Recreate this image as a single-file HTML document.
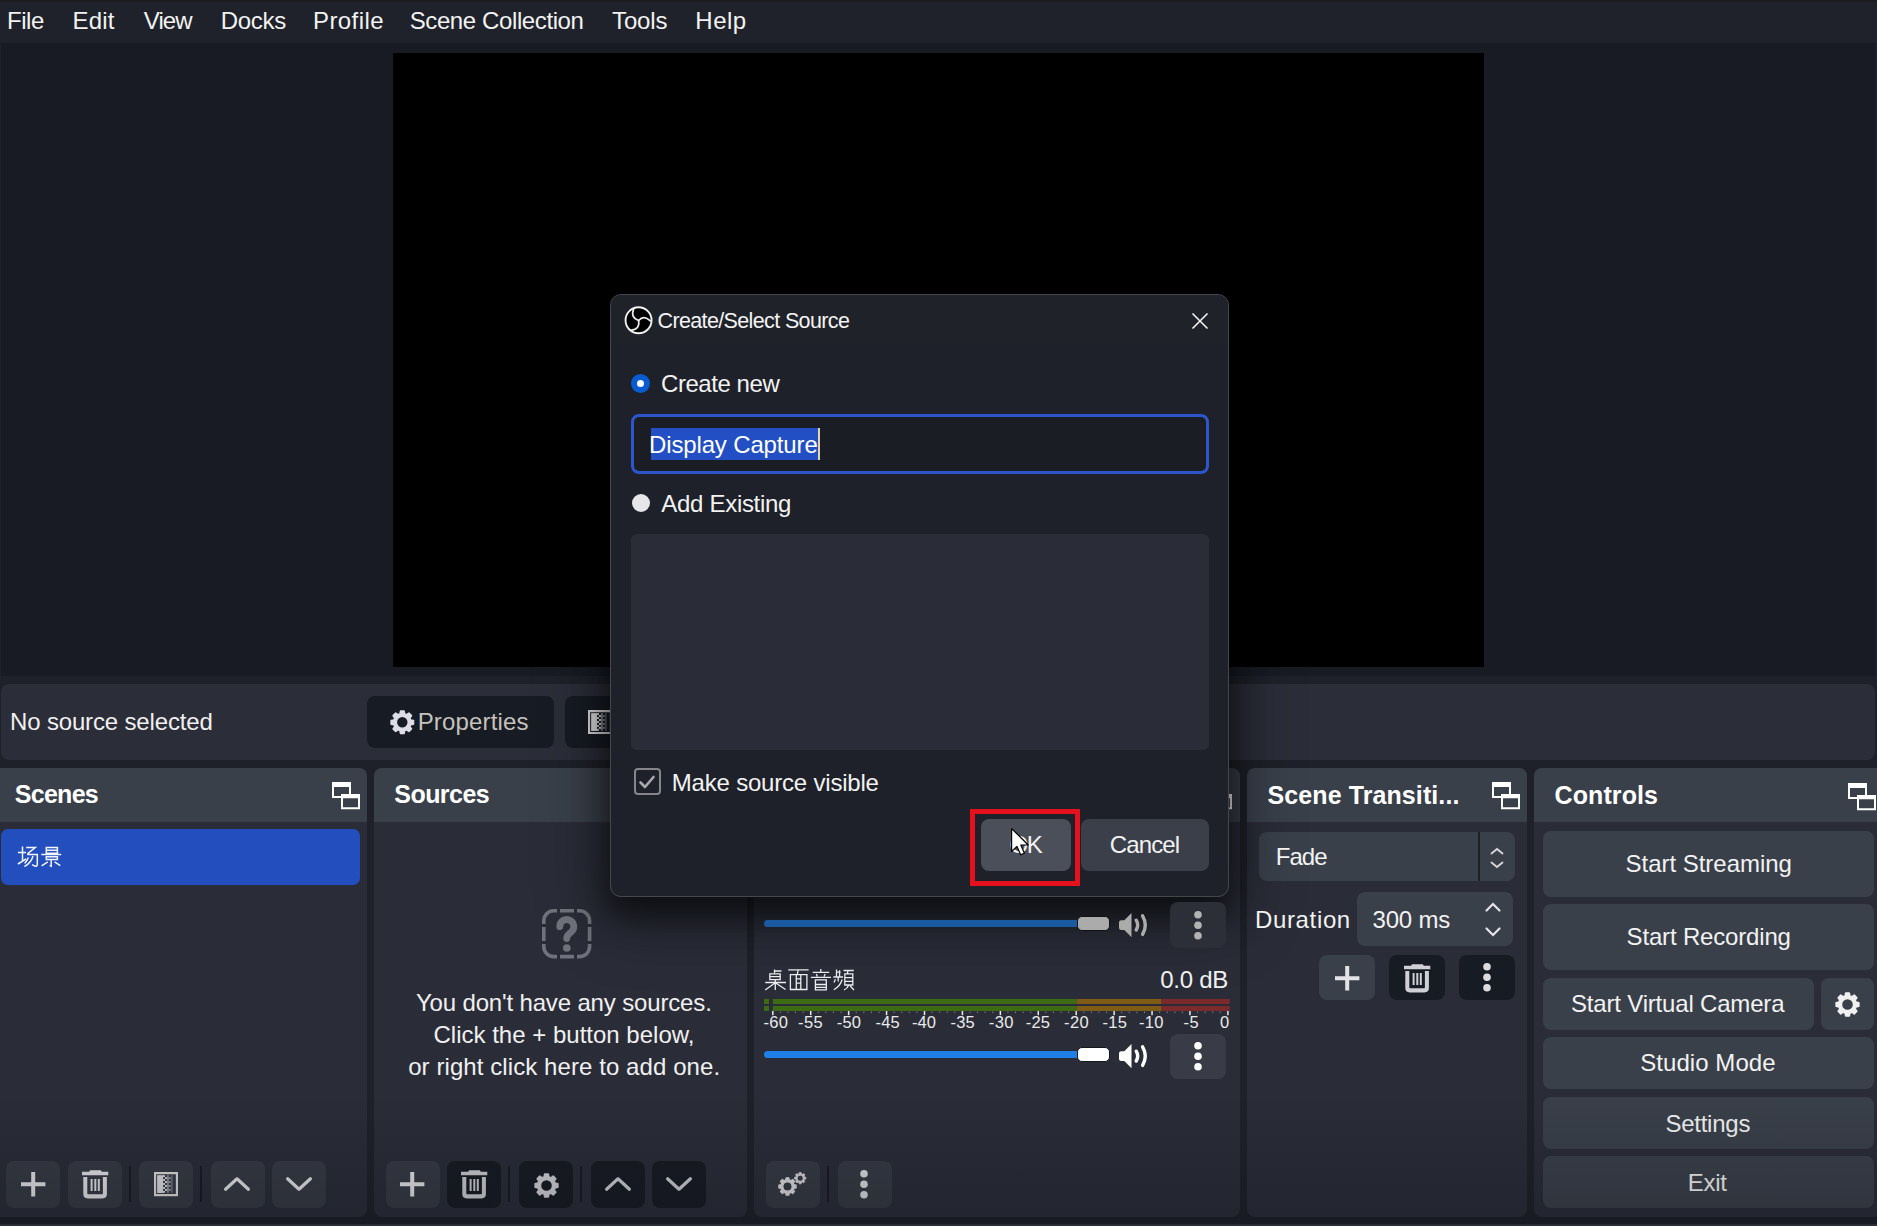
<!DOCTYPE html>
<html><head><meta charset="utf-8">
<style>
*{box-sizing:border-box;margin:0;padding:0}
html,body{width:1877px;height:1226px;overflow:hidden;background:#1e2129;font-family:"Liberation Sans",sans-serif;color:#f4f4f4}
.a{position:absolute}
.t{position:absolute;white-space:nowrap;line-height:1;font-family:"Liberation Sans",sans-serif}
.dock{position:absolute;top:768px;height:449px;background:#2a2d38;border-radius:8px;overflow:hidden}
.hd{position:absolute;left:0;top:0;right:0;height:54px;background:#3a404a}
.btn{position:absolute;background:#363a44;border-radius:8px}
.dk{background:#171b23}
.cb{position:absolute;background:#3a404a;border-radius:8px}
.sep{position:absolute;width:2px;background:#191b24}
svg{position:absolute;overflow:visible}
</style></head><body>
<svg width="0" height="0" style="position:absolute">
<defs>
<symbol id="gear" viewBox="-12.5 -12.5 25 25" overflow="visible"><path fill-rule="evenodd" stroke-width="1.6" stroke-linejoin="round" d="M-2.35,-8.48 L-1.83,-11.35 L1.83,-11.35 L2.35,-8.48 L4.34,-7.66 L6.73,-9.32 L9.32,-6.73 L7.66,-4.34 L8.48,-2.35 L11.35,-1.83 L11.35,1.83 L8.48,2.35 L7.66,4.34 L9.32,6.73 L6.73,9.32 L4.34,7.66 L2.35,8.48 L1.83,11.35 L-1.83,11.35 L-2.35,8.48 L-4.34,7.66 L-6.73,9.32 L-9.32,6.73 L-7.66,4.34 L-8.48,2.35 L-11.35,1.83 L-11.35,-1.83 L-8.48,-2.35 L-7.66,-4.34 L-9.32,-6.73 L-6.73,-9.32 L-4.34,-7.66Z M6.10,0 A6.1,6.1 0 1 0 -6.10,0 A6.1,6.1 0 1 0 6.10,0Z"/></symbol>
<symbol id="float" viewBox="0 0 28 28" overflow="visible">
<path fill="currentColor" fill-rule="evenodd" d="M0,0H19V16H0Z M2,5V14H17V5Z"/>
<path fill="var(--bg)" d="M9,12H28V27H9Z"/>
<path fill="currentColor" fill-rule="evenodd" d="M9,12H28V27.3H9Z M11,16.3V25.3H26V16.3Z"/>
</symbol>
<symbol id="trash" viewBox="0 0 27 29" overflow="visible">
<path fill="currentColor" d="M8.1,0.2H18.8L19.8,1.8H26.3V5.3H0V1.8H7.1Z"/>
<path fill="currentColor" d="M1.3,7H5.3V23.5Q5.3,24.3 6.1,24.3H20.1Q20.9,24.3 20.9,23.5V7H24.9V24Q24.9,28.4 20.5,28.4H5.7Q1.3,28.4 1.3,24Z"/>
<rect fill="currentColor" x="8.6" y="9" width="2" height="12"/>
<rect fill="currentColor" x="12.3" y="9" width="2" height="12"/>
<rect fill="currentColor" x="15.8" y="9" width="2" height="12"/>
</symbol>
<symbol id="plus" viewBox="0 0 24.4 24.4" overflow="visible"><path fill="currentColor" d="M10.2,0H14.2V10.2H24.4V14.2H14.2V24.4H10.2V14.2H0V10.2H10.2Z"/></symbol>
<symbol id="up" viewBox="0 0 26 14" overflow="visible"><path fill="none" stroke="currentColor" stroke-width="3.2" stroke-linecap="round" stroke-linejoin="round" d="M1.6,12.2L13,1.8L24.4,12.2"/></symbol>
<symbol id="down" viewBox="0 0 26 14" overflow="visible"><path fill="none" stroke="currentColor" stroke-width="3.2" stroke-linecap="round" stroke-linejoin="round" d="M1.6,1.8L13,12.2L24.4,1.8"/></symbol>
<symbol id="dots" viewBox="0 0 8 29" overflow="visible"><circle fill="currentColor" cx="4" cy="3.8" r="3.8"/><circle fill="currentColor" cx="4" cy="14.3" r="3.8"/><circle fill="currentColor" cx="4" cy="24.8" r="3.8"/></symbol>
<symbol id="spk" viewBox="0 0 29 25" overflow="visible">
<path fill="currentColor" d="M12.5,0V24.2L5.3,17H2.2Q0,17 0,14.8V9.4Q0,7.2 2.2,7.2H5.3Z"/>
<path fill="none" stroke="currentColor" stroke-width="3.4" stroke-linecap="round" d="M17.2,7.2Q20.2,12.1 17.2,17"/>
<path fill="none" stroke="currentColor" stroke-width="3.4" stroke-linecap="round" d="M23.6,2.8Q29,12.1 23.6,21.4"/>
</symbol>
<symbol id="filt" viewBox="0 0 25 25" overflow="visible">
<path fill="currentColor" fill-rule="evenodd" d="M0,0H24.5V24.6H0Z M2.2,2.2V22.4H22.3V2.2Z"/>
<rect fill="currentColor" x="3.2" y="3.2" width="6" height="18.2"/>
<g fill="currentColor"><rect x="9.2" y="3.2" width="2" height="2"/><rect x="11.2" y="5.2" width="2" height="2"/><rect x="9.2" y="7.2" width="2" height="2"/><rect x="11.2" y="9.2" width="2" height="2"/><rect x="9.2" y="11.2" width="2" height="2"/><rect x="11.2" y="13.2" width="2" height="2"/><rect x="9.2" y="15.2" width="2" height="2"/><rect x="11.2" y="17.2" width="2" height="2"/><rect x="9.2" y="19.2" width="2" height="2"/></g>
<g fill="currentColor" opacity=".55"><rect x="13.2" y="3.2" width="2" height="18"/><rect x="15.2" y="5.2" width="2" height="2"/><rect x="15.2" y="9.2" width="2" height="2"/><rect x="15.2" y="13.2" width="2" height="2"/><rect x="15.2" y="17.2" width="2" height="2"/></g>
<g fill="currentColor" opacity=".3"><rect x="17.2" y="3.2" width="2" height="18"/></g>
</symbol>
</defs></svg>

<!-- menubar -->
<div class="a" style="left:0;top:0;width:1877px;height:43px;background:#1f222a;border-top:2px solid #1c1c1e"></div>
<!-- preview -->
<div class="a" style="left:1px;top:43px;width:1874px;height:633px;background:#181b24"></div>
<div class="a" style="left:393px;top:53px;width:1091px;height:614px;background:#000"></div>
<!-- properties bar -->
<div class="a" style="left:1px;top:684px;width:1874px;height:76px;background:#2b2d38;border-radius:8px"></div>
<div class="btn dk" style="left:367px;top:696px;width:187px;height:52px"></div>
<svg style="left:389.7px;top:709.7px;color:#dcdde6" width="24.6" height="24.6"><use href="#gear" width="24.6" height="24.6" fill="#dcdde6" stroke="#dcdde6"/></svg>
<div class="btn dk" style="left:565px;top:696px;width:200px;height:52px"></div>
<svg style="left:587.7px;top:710px;color:#e0e0e4" width="24.5" height="24.5"><use href="#filt" width="24.5" height="24.5"/></svg>

<!-- docks -->
<div class="dock" style="left:0;width:367px;border-radius:0 8px 8px 0"><div class="hd"></div></div>
<div class="dock" style="left:374px;width:373px"><div class="hd"></div></div>
<div class="dock" style="left:754px;width:486px"><div class="hd"></div></div>
<div class="dock" style="left:1247px;width:280px"><div class="hd"></div></div>
<div class="dock" style="left:1534px;width:350px"><div class="hd"></div></div>
<!-- float icons -->
<svg style="left:332.3px;top:782.3px;color:#fff;--bg:#3a404a" width="28" height="28"><use href="#float" width="28" height="28"/></svg>
<svg style="left:712px;top:782.3px;color:#fff;--bg:#3a404a" width="28" height="28"><use href="#float" width="28" height="28"/></svg>
<svg style="left:1204.4px;top:782.3px;color:#fff;--bg:#3a404a" width="28" height="28"><use href="#float" width="28" height="28"/></svg>
<svg style="left:1492.3px;top:782.3px;color:#fff;--bg:#3a404a" width="28" height="28"><use href="#float" width="28" height="28"/></svg>
<svg style="left:1847.7px;top:782.5px;color:#fff;--bg:#3a404a" width="28" height="28"><use href="#float" width="28" height="28"/></svg>

<!-- scenes -->
<div class="a" style="left:1px;top:829px;width:359px;height:56px;background:#224ebe;border-radius:7px"></div>
<svg style="left:0;top:0" width="1" height="1"><g fill="none" stroke="#f4f6ff" stroke-width="1.5" stroke-linecap="butt">
<path d="M22.5,846.5V860.5M17.9,852.5H26M17.9,864L26.2,858.8"/>
<path d="M26.2,847.6H35.2L27.4,853.8M27.2,854.6H37.3V864.6Q37.3,866.3 35.3,866.2L32,864.6"/>
<path d="M28.3,857.6Q27,861.5 24.6,863.3M33,856Q31.5,862.5 24.5,866.5"/>
<path d="M46.3,847.5H57.4V853.3H46.3ZM46.3,850.3H57.4M41.3,854.6H61.2M46.3,856.7H57.4V859.5H46.3ZM51.2,859.5V866.2L49.6,865.4M47.8,861.8L41.6,865.8M54.6,861.8L60.3,865.6"/>
</g></svg>
<div class="btn" style="left:6px;top:1161px;width:54px;height:47px"></div>
<svg style="left:20.8px;top:1171.7px;color:#e2e3e6" width="24.4" height="24.4"><use href="#plus" width="24.4" height="24.4"/></svg>
<div class="btn" style="left:68px;top:1161px;width:54px;height:47px"></div>
<svg style="left:81.7px;top:1169.8px;color:#e2e3e6" width="27" height="29"><use href="#trash" width="27" height="29"/></svg>
<div class="sep" style="left:128.5px;top:1166px;height:36px"></div>
<div class="btn" style="left:139px;top:1161px;width:54px;height:47px"></div>
<svg style="left:153.7px;top:1171.6px;color:#dcdce0" width="24.5" height="24.6"><use href="#filt" width="24.5" height="24.6"/></svg>
<div class="sep" style="left:199.5px;top:1166px;height:36px"></div>
<div class="btn" style="left:211px;top:1161px;width:54px;height:47px"></div>
<svg style="left:224px;top:1176.5px;color:#e2e3e6" width="26" height="14"><use href="#up" width="26" height="14"/></svg>
<div class="btn" style="left:272px;top:1161px;width:54px;height:47px"></div>
<svg style="left:286px;top:1177px;color:#e2e3e6" width="26" height="14"><use href="#down" width="26" height="14"/></svg>

<!-- sources -->
<svg style="left:541.5px;top:908.5px" width="50" height="50" viewBox="0 0 50 50">
<defs><mask id="qm"><rect x="-2" y="-2" width="54" height="54" fill="#fff"/><g fill="#000"><rect x="15" y="-2" width="3" height="8"/><rect x="32" y="-2" width="3" height="8"/><rect x="15" y="44" width="3" height="8"/><rect x="32" y="44" width="3" height="8"/><rect x="-2" y="15" width="8" height="3"/><rect x="-2" y="32" width="8" height="3"/><rect x="44" y="15" width="8" height="3"/><rect x="44" y="32" width="8" height="3"/></g></mask></defs>
<rect x="1.8" y="1.8" width="45.8" height="45.8" rx="10" fill="none" stroke="#70737b" stroke-width="3.6" mask="url(#qm)"/>
<path fill="none" stroke="#70737b" stroke-width="6.8" stroke-linecap="round" d="M17.8,17.6A7,7 0 1 1 29.6,22.6L27,25Q24.7,27 24.7,29.5"/>
<rect x="14.4" y="14.6" width="0" height="0"/>
<circle cx="24.8" cy="39" r="3.8" fill="#70737b"/>
</svg>
<div class="btn" style="left:386px;top:1161px;width:54px;height:47px"></div>
<svg style="left:400px;top:1171.7px;color:#e2e3e6" width="24.4" height="24.4"><use href="#plus" width="24.4" height="24.4"/></svg>
<div class="btn dk" style="left:447px;top:1161px;width:54px;height:47px"></div>
<svg style="left:461px;top:1169.8px;color:#cbccd2" width="27" height="29"><use href="#trash" width="27" height="29"/></svg>
<div class="sep" style="left:508px;top:1166px;height:36px"></div>
<div class="btn dk" style="left:519px;top:1161px;width:54px;height:47px"></div>
<svg style="left:533.5px;top:1173px;" width="25" height="25"><use href="#gear" width="25" height="25" fill="#cfd0d6" stroke="#cfd0d6"/></svg>
<div class="sep" style="left:579.5px;top:1166px;height:36px"></div>
<div class="btn dk" style="left:590.5px;top:1161px;width:54px;height:47px"></div>
<svg style="left:604.5px;top:1176.5px;color:#cbccd2" width="26" height="14"><use href="#up" width="26" height="14"/></svg>
<div class="btn dk" style="left:652px;top:1161px;width:54px;height:47px"></div>
<svg style="left:666px;top:1177px;color:#cbccd2" width="26" height="14"><use href="#down" width="26" height="14"/></svg>

<!-- mixer -->
<!-- row2 -->
<svg style="left:0;top:0" width="1" height="1">
<rect x="764" y="999" width="5" height="5" fill="#3d6b14"/><rect x="764" y="1006" width="5" height="5" fill="#3d6b14"/>
<rect x="772.8" y="999" width="303.7" height="5" fill="#3d6b14"/><rect x="772.8" y="1006" width="303.7" height="5" fill="#3d6b14"/>
<rect x="1076.5" y="999" width="84.5" height="5" fill="#7e5c16"/><rect x="1076.5" y="1006" width="84.5" height="5" fill="#7e5c16"/>
<rect x="1161" y="999" width="68.8" height="5" fill="#7b2a2c"/><rect x="1161" y="1006" width="68.8" height="5" fill="#7b2a2c"/>
<rect x="772.05" y="1011" width="1.5" height="4.2" fill="#e8e8e8"/><rect x="779.88" y="1011.5" width="1" height="1.6" fill="#7a7c82"/><rect x="787.47" y="1011.5" width="1" height="1.6" fill="#7a7c82"/><rect x="795.05" y="1011.5" width="1" height="1.6" fill="#7a7c82"/><rect x="802.64" y="1011.5" width="1" height="1.6" fill="#7a7c82"/><rect x="809.97" y="1011" width="1.5" height="4.2" fill="#e8e8e8"/><rect x="817.81" y="1011.5" width="1" height="1.6" fill="#7a7c82"/><rect x="825.39" y="1011.5" width="1" height="1.6" fill="#7a7c82"/><rect x="832.98" y="1011.5" width="1" height="1.6" fill="#7a7c82"/><rect x="840.56" y="1011.5" width="1" height="1.6" fill="#7a7c82"/><rect x="847.90" y="1011" width="1.5" height="4.2" fill="#e8e8e8"/><rect x="855.73" y="1011.5" width="1" height="1.6" fill="#7a7c82"/><rect x="863.32" y="1011.5" width="1" height="1.6" fill="#7a7c82"/><rect x="870.90" y="1011.5" width="1" height="1.6" fill="#7a7c82"/><rect x="878.49" y="1011.5" width="1" height="1.6" fill="#7a7c82"/><rect x="885.82" y="1011" width="1.5" height="4.2" fill="#e8e8e8"/><rect x="893.66" y="1011.5" width="1" height="1.6" fill="#7a7c82"/><rect x="901.24" y="1011.5" width="1" height="1.6" fill="#7a7c82"/><rect x="908.83" y="1011.5" width="1" height="1.6" fill="#7a7c82"/><rect x="916.41" y="1011.5" width="1" height="1.6" fill="#7a7c82"/><rect x="923.75" y="1011" width="1.5" height="4.2" fill="#e8e8e8"/><rect x="931.58" y="1011.5" width="1" height="1.6" fill="#7a7c82"/><rect x="939.17" y="1011.5" width="1" height="1.6" fill="#7a7c82"/><rect x="946.75" y="1011.5" width="1" height="1.6" fill="#7a7c82"/><rect x="954.34" y="1011.5" width="1" height="1.6" fill="#7a7c82"/><rect x="961.67" y="1011" width="1.5" height="4.2" fill="#e8e8e8"/><rect x="969.51" y="1011.5" width="1" height="1.6" fill="#7a7c82"/><rect x="977.09" y="1011.5" width="1" height="1.6" fill="#7a7c82"/><rect x="984.68" y="1011.5" width="1" height="1.6" fill="#7a7c82"/><rect x="992.26" y="1011.5" width="1" height="1.6" fill="#7a7c82"/><rect x="999.60" y="1011" width="1.5" height="4.2" fill="#e8e8e8"/><rect x="1007.43" y="1011.5" width="1" height="1.6" fill="#7a7c82"/><rect x="1015.02" y="1011.5" width="1" height="1.6" fill="#7a7c82"/><rect x="1022.60" y="1011.5" width="1" height="1.6" fill="#7a7c82"/><rect x="1030.19" y="1011.5" width="1" height="1.6" fill="#7a7c82"/><rect x="1037.52" y="1011" width="1.5" height="4.2" fill="#e8e8e8"/><rect x="1045.36" y="1011.5" width="1" height="1.6" fill="#7a7c82"/><rect x="1052.94" y="1011.5" width="1" height="1.6" fill="#7a7c82"/><rect x="1060.53" y="1011.5" width="1" height="1.6" fill="#7a7c82"/><rect x="1068.11" y="1011.5" width="1" height="1.6" fill="#7a7c82"/><rect x="1075.45" y="1011" width="1.5" height="4.2" fill="#e8e8e8"/><rect x="1083.28" y="1011.5" width="1" height="1.6" fill="#7a7c82"/><rect x="1090.87" y="1011.5" width="1" height="1.6" fill="#7a7c82"/><rect x="1098.45" y="1011.5" width="1" height="1.6" fill="#7a7c82"/><rect x="1106.04" y="1011.5" width="1" height="1.6" fill="#7a7c82"/><rect x="1113.38" y="1011" width="1.5" height="4.2" fill="#e8e8e8"/><rect x="1121.21" y="1011.5" width="1" height="1.6" fill="#7a7c82"/><rect x="1128.79" y="1011.5" width="1" height="1.6" fill="#7a7c82"/><rect x="1136.38" y="1011.5" width="1" height="1.6" fill="#7a7c82"/><rect x="1143.96" y="1011.5" width="1" height="1.6" fill="#7a7c82"/><rect x="1151.30" y="1011" width="1.5" height="4.2" fill="#e8e8e8"/><rect x="1159.13" y="1011.5" width="1" height="1.6" fill="#7a7c82"/><rect x="1166.72" y="1011.5" width="1" height="1.6" fill="#7a7c82"/><rect x="1174.30" y="1011.5" width="1" height="1.6" fill="#7a7c82"/><rect x="1181.89" y="1011.5" width="1" height="1.6" fill="#7a7c82"/><rect x="1189.22" y="1011" width="1.5" height="4.2" fill="#e8e8e8"/><rect x="1197.06" y="1011.5" width="1" height="1.6" fill="#7a7c82"/><rect x="1204.64" y="1011.5" width="1" height="1.6" fill="#7a7c82"/><rect x="1212.23" y="1011.5" width="1" height="1.6" fill="#7a7c82"/><rect x="1219.81" y="1011.5" width="1" height="1.6" fill="#7a7c82"/><rect x="1227.15" y="1011" width="1.5" height="4.2" fill="#e8e8e8"/>
<g fill="none" stroke="#eceef2" stroke-width="1.3" stroke-linecap="butt">
<path d="M774.5,969.6V973M774.5,971H781.5M769.8,973.8H780.2V979.7H769.8ZM769.8,976.7H780.2M765.3,982.5H786M775.3,979.7V990M775.3,982.7L765.2,990M775.3,982.7L785.6,989.5"/>
<path d="M788.2,969.9H808.6M798.3,969.9L797.2,974.4M790.4,974.6H806.9V989.5H790.4ZM796.3,974.6V989.5M800.8,974.6V989.5M796.3,978.8H800.8M796.3,983.2H800.8"/>
<path d="M820.8,969V972M812.7,972.3H829.2M816.3,974L817.4,976.6M825.2,974L824,976.6M810.9,977.3H831M815.4,979.8H826.3V989.8H815.4ZM815.4,984.5H826.3M815.4,987.3H826.3"/>
<path d="M836.5,969.5V976.8M836.5,972.2H840.6M839.6,970.2V976.8M833.3,977H843M838.2,977V981.5M835.4,979.2L834,982.5M842.2,979.5Q840,986.5 833.8,989.8M843.5,970.5H853.8M848.2,970.5L847.2,973.5M844.8,973.8H852.8V985H844.8ZM844.8,977.6H852.8M844.8,981.3H852.8M848.8,985Q847.5,988.5 844,990M850.2,986L854,990"/>
</g>
</svg>
<div class="a" style="left:764px;top:1051px;width:316px;height:7px;background:#1e80e6;border-radius:3.5px 0 0 3.5px"></div>
<div class="a" style="left:1076.5px;top:1046.6px;width:33px;height:15.5px;background:#fff;border:1px solid #15171c;border-radius:5px"></div>
<svg style="left:1118.9px;top:1043.9px;color:#fff" width="29" height="25"><use href="#spk" width="29" height="25"/></svg>
<div class="btn" style="left:1170px;top:1033.6px;width:56px;height:45.5px;background:#393c47"></div>
<svg style="left:1194px;top:1041.8px;color:#fff" width="8" height="29"><use href="#dots" width="8" height="29"/></svg>

<div class="btn" style="left:766px;top:1161px;width:54px;height:47px"></div>
<svg style="left:777.9px;top:1177.2px" width="19" height="19"><use href="#gear" width="19" height="19" fill="#dcdce0" stroke="#dcdce0"/></svg>
<svg style="left:793.7px;top:1171.7px" width="12.4" height="12.4"><use href="#gear" width="12.4" height="12.4" fill="#dcdce0" stroke="#dcdce0"/></svg>
<div class="sep" style="left:826.5px;top:1166px;height:36px"></div>
<div class="btn" style="left:838px;top:1161px;width:54px;height:47px"></div>
<svg style="left:860px;top:1169.7px;color:#dcdce0" width="8" height="29"><use href="#dots" width="8" height="29"/></svg>

<!-- transitions -->
<div class="cb" style="left:1259px;top:832px;width:256px;height:49px"></div>
<div class="a" style="left:1478px;top:832px;width:1.5px;height:49px;background:#1f2129"></div>
<svg style="left:1490px;top:847.5px" width="14" height="20" viewBox="0 0 14 20"><path fill="none" stroke="#d8d8dc" stroke-width="1.8" stroke-linecap="round" d="M1.5,5.5L7,1L12.5,5.5M1.5,14.5L7,19L12.5,14.5"/></svg>
<div class="cb" style="left:1357px;top:892px;width:156px;height:54px"></div>
<svg style="left:1485px;top:901.5px" width="16" height="35" viewBox="0 0 16 35"><path fill="none" stroke="#e4e4e8" stroke-width="2.2" stroke-linecap="round" d="M1.5,8.5L8,2L14.5,8.5M1.5,26.5L8,33L14.5,26.5"/></svg>
<div class="cb" style="left:1319px;top:955px;width:56px;height:45px"></div>
<svg style="left:1335px;top:966px;color:#e4e4e8" width="24.4" height="24.4"><use href="#plus" width="24.4" height="24.4"/></svg>
<div class="btn dk" style="left:1389px;top:955px;width:56px;height:45px"></div>
<svg style="left:1403.5px;top:964px;color:#cfd0d6" width="27" height="29"><use href="#trash" width="27" height="29"/></svg>
<div class="btn dk" style="left:1459px;top:955px;width:56px;height:45px"></div>
<svg style="left:1483px;top:963px;color:#dcdce0" width="8" height="29"><use href="#dots" width="8" height="29"/></svg>

<!-- controls -->
<div class="cb" style="left:1543px;top:830.5px;width:331px;height:66px"></div>
<div class="cb" style="left:1543px;top:904px;width:331px;height:66px"></div>
<div class="cb" style="left:1543px;top:978px;width:271px;height:52px"></div>
<div class="cb" style="left:1821px;top:978px;width:53px;height:52px"></div>
<svg style="left:1835px;top:991.5px" width="25" height="25"><use href="#gear" width="25" height="25" fill="#f0f0f0" stroke="#f0f0f0"/></svg>
<div class="cb" style="left:1543px;top:1037px;width:331px;height:52px"></div>
<div class="cb" style="left:1543px;top:1097px;width:331px;height:52px"></div>
<div class="cb" style="left:1543px;top:1156px;width:331px;height:52px"></div>

<!-- dialog -->
<div class="a" style="left:610px;top:294px;width:619px;height:603px;border-radius:11px;box-shadow:0 16px 30px 2px rgba(0,0,0,.5),0 14px 60px 14px rgba(0,0,0,.35)"></div>
<!-- row1 (shadowed) -->
<div class="a" style="left:764px;top:920px;width:316px;height:7px;background:#1a5aa0;border-radius:3.5px 0 0 3.5px"></div>
<div class="a" style="left:1076.5px;top:915.6px;width:33px;height:15.5px;background:#ababab;border:1px solid #101115;border-radius:5px"></div>
<svg style="left:1118.9px;top:912.8px;color:#ababab" width="29" height="25"><use href="#spk" width="29" height="25"/></svg>
<div class="btn" style="left:1170px;top:902px;width:56px;height:46px;background:#2c2f38"></div>
<svg style="left:1194px;top:911px;color:#b3b3b3" width="8" height="29"><use href="#dots" width="8" height="29"/></svg>
<div class="a" style="left:610px;top:294px;width:619px;height:603px;background:#1e2129;border:1px solid #45474f;border-radius:11px;overflow:hidden">
<div class="a" style="left:0;top:0;width:619px;height:48px;background:#20222a"></div>
</div>
<svg style="left:623.5px;top:305.5px" width="29" height="29" viewBox="0 0 29 29">
<circle cx="14.56" cy="14.3" r="13" fill="#000" stroke="#f2f2f2" stroke-width="1.9"/>
<g fill="none" stroke="#eaeaea" stroke-width="1.7" stroke-linecap="round">
<path d="M9.6,3.3Q6.2,11.5 14.6,14.5"/><path d="M14.6,14.5Q19.8,8.6 26.3,14.8"/><path d="M14.6,14.5Q16.2,23 7.2,24.2"/>
</g>
</svg>
<svg style="left:1192px;top:313px" width="16" height="16" viewBox="0 0 16 16"><path stroke="#f2f2f2" stroke-width="1.6" d="M0.5,0.5L15.5,15.5M15.5,0.5L0.5,15.5"/></svg>
<div class="a" style="left:630.6px;top:373.8px;width:19.4px;height:19.4px;border-radius:50%;background:#0a5bd0"></div>
<div class="a" style="left:636.8px;top:380px;width:7px;height:7px;border-radius:50%;background:#fff"></div>
<div class="a" style="left:631px;top:414px;width:578px;height:60px;border:3.5px solid #2d56cc;border-radius:8px;background:#1b1d24"></div>
<div class="a" style="left:651px;top:428px;width:167px;height:32px;background:#234fc4"></div>
<div class="a" style="left:818px;top:428px;width:2px;height:32px;background:#e0d6b0"></div>
<div class="a" style="left:631.5px;top:493.6px;width:18px;height:18px;border-radius:50%;background:#e6e6ea"></div>
<div class="a" style="left:631px;top:533.5px;width:578px;height:216.5px;background:#2a2c37;border-radius:6px"></div>
<div class="a" style="left:633.5px;top:768.4px;width:27px;height:27px;border:2.2px solid #85868c;border-radius:4px"></div>
<svg style="left:637px;top:772px" width="20" height="20" viewBox="0 0 20 20"><path fill="none" stroke="#a9aab0" stroke-width="2.6" stroke-linecap="round" stroke-linejoin="round" d="M3.5,10.5L8,15L16.5,5"/></svg>
<div class="a" style="left:981px;top:818.6px;width:89.5px;height:52.4px;background:#4b4f59;border-radius:8px"></div>
<div class="a" style="left:1081px;top:818.6px;width:128px;height:52.4px;background:#3a3f49;border-radius:8px"></div>

<div class="t" style="left:6.9px;top:9.1px;font-weight:400;font-size:24px;letter-spacing:-0.417px;color:#f2f2f2;">File</div>
<div class="t" style="left:72.6px;top:9.1px;font-weight:400;font-size:24px;letter-spacing:0.133px;color:#f2f2f2;">Edit</div>
<div class="t" style="left:143.8px;top:9.1px;font-weight:400;font-size:24px;letter-spacing:-0.967px;color:#f2f2f2;">View</div>
<div class="t" style="left:220.7px;top:9.1px;font-weight:400;font-size:24px;letter-spacing:-0.275px;color:#f2f2f2;">Docks</div>
<div class="t" style="left:313.0px;top:9.1px;font-weight:400;font-size:24px;letter-spacing:0.417px;color:#f2f2f2;">Profile</div>
<div class="t" style="left:409.7px;top:9.1px;font-weight:400;font-size:24px;letter-spacing:-0.393px;color:#f2f2f2;">Scene Collection</div>
<div class="t" style="left:612.1px;top:9.1px;font-weight:400;font-size:24px;letter-spacing:-0.175px;color:#f2f2f2;">Tools</div>
<div class="t" style="left:695.3px;top:9.1px;font-weight:400;font-size:24px;letter-spacing:0.5px;color:#f2f2f2;">Help</div>
<div class="t" style="left:10.0px;top:710.4px;font-weight:400;font-size:24px;letter-spacing:-0.153px;color:#f0f0f0;">No source selected</div>
<div class="t" style="left:417.7px;top:710.1px;font-weight:400;font-size:24px;letter-spacing:0.167px;color:#c6c2bd;">Properties</div>
<div class="t" style="left:14.8px;top:782.2px;font-weight:700;font-size:25px;letter-spacing:-0.72px;color:#ffffff;">Scenes</div>
<div class="t" style="left:394.3px;top:782.4px;font-weight:700;font-size:25px;letter-spacing:-0.55px;color:#ffffff;">Sources</div>
<div class="t" style="left:1267.6px;top:782.9px;font-weight:700;font-size:25px;letter-spacing:0.088px;color:#ffffff;">Scene Transiti...</div>
<div class="t" style="left:1554.5px;top:782.5px;font-weight:700;font-size:25px;letter-spacing:0.1px;color:#ffffff;">Controls</div>
<div class="t" style="left:657.5px;top:310.7px;font-weight:400;font-size:21.5px;letter-spacing:-0.632px;color:#f4f4f4;">Create/Select Source</div>
<div class="t" style="left:661.0px;top:372.4px;font-weight:400;font-size:24px;letter-spacing:-0.444px;color:#f2f2f2;">Create new</div>
<div class="t" style="left:649.0px;top:432.9px;font-weight:400;font-size:24px;letter-spacing:-0.143px;color:#ffffff;">Display Capture</div>
<div class="t" style="left:661.3px;top:491.6px;font-weight:400;font-size:24px;letter-spacing:-0.3px;color:#f2f2f2;">Add Existing</div>
<div class="t" style="left:671.8px;top:770.8px;font-weight:400;font-size:24px;letter-spacing:-0.2px;color:#f2f2f2;">Make source visible</div>
<div class="t" style="left:1109.7px;top:833.3px;font-weight:400;font-size:24px;letter-spacing:-0.84px;color:#f2f2f2;">Cancel</div>
<div class="t" style="left:1009.5px;top:833.3px;font-weight:400;font-size:24px;letter-spacing:-1.5px;color:#f2f2f2;">OK</div>
<div class="t" style="left:415.9px;top:991.4px;font-weight:400;font-size:24px;letter-spacing:-0.154px;color:#f0f0f0;">You don&#x27;t have any sources.</div>
<div class="t" style="left:433.5px;top:1023.0px;font-weight:400;font-size:24px;letter-spacing:0.004px;color:#f0f0f0;">Click the + button below,</div>
<div class="t" style="left:408.2px;top:1054.6px;font-weight:400;font-size:24px;letter-spacing:0.08px;color:#f0f0f0;">or right click here to add one.</div>
<div class="t" style="left:1160.3px;top:967.5px;font-weight:400;font-size:24px;letter-spacing:-0.28px;color:#f0f0f0;">0.0 dB</div>
<div class="t" style="left:1275.7px;top:845.0px;font-weight:400;font-size:24px;letter-spacing:-0.933px;color:#f2f2f2;">Fade</div>
<div class="t" style="left:1255.0px;top:907.5px;font-weight:400;font-size:24px;letter-spacing:0.643px;color:#f2f2f2;">Duration</div>
<div class="t" style="left:1372.6px;top:907.6px;font-weight:400;font-size:24px;letter-spacing:-0.22px;color:#f2f2f2;">300 ms</div>
<div class="t" style="left:1625.5px;top:852.0px;font-weight:400;font-size:24px;letter-spacing:-0.021px;color:#f2f2f2;">Start Streaming</div>
<div class="t" style="left:1626.6px;top:925.3px;font-weight:400;font-size:24px;letter-spacing:-0.171px;color:#f2f2f2;">Start Recording</div>
<div class="t" style="left:1571.0px;top:992.3px;font-weight:400;font-size:24px;letter-spacing:-0.184px;color:#f2f2f2;">Start Virtual Camera</div>
<div class="t" style="left:1640.3px;top:1051.4px;font-weight:400;font-size:24px;letter-spacing:0.05px;color:#f2f2f2;">Studio Mode</div>
<div class="t" style="left:1665.4px;top:1111.7px;font-weight:400;font-size:24px;letter-spacing:-0.243px;color:#f2f2f2;">Settings</div>
<div class="t" style="left:1687.8px;top:1170.9px;font-weight:400;font-size:24px;letter-spacing:-0.3px;color:#f2f2f2;">Exit</div>
<div class="t" style="left:763.4px;top:1013.9px;font-weight:400;font-size:16.5px;letter-spacing:0.4px;color:#eaeaea;">-60</div>
<div class="t" style="left:798.0px;top:1013.9px;font-weight:400;font-size:16.5px;letter-spacing:0.4px;color:#eaeaea;">-55</div>
<div class="t" style="left:836.8px;top:1013.9px;font-weight:400;font-size:16.5px;letter-spacing:0.2px;color:#eaeaea;">-50</div>
<div class="t" style="left:875.5px;top:1013.9px;font-weight:400;font-size:16.5px;letter-spacing:0.15px;color:#eaeaea;">-45</div>
<div class="t" style="left:911.9px;top:1013.9px;font-weight:400;font-size:16.5px;letter-spacing:0.15px;color:#eaeaea;">-40</div>
<div class="t" style="left:950.5px;top:1013.9px;font-weight:400;font-size:16.5px;letter-spacing:0.2px;color:#eaeaea;">-35</div>
<div class="t" style="left:988.8px;top:1013.9px;font-weight:400;font-size:16.5px;letter-spacing:0.35px;color:#eaeaea;">-30</div>
<div class="t" style="left:1025.7px;top:1013.9px;font-weight:400;font-size:16.5px;letter-spacing:0.2px;color:#eaeaea;">-25</div>
<div class="t" style="left:1064.0px;top:1013.9px;font-weight:400;font-size:16.5px;letter-spacing:0.45px;color:#eaeaea;">-20</div>
<div class="t" style="left:1102.4px;top:1013.9px;font-weight:400;font-size:16.5px;letter-spacing:0.4px;color:#eaeaea;">-15</div>
<div class="t" style="left:1139.1px;top:1013.9px;font-weight:400;font-size:16.5px;letter-spacing:0.25px;color:#eaeaea;">-10</div>
<div class="t" style="left:1183.5px;top:1013.9px;font-weight:400;font-size:16.5px;letter-spacing:0.5px;color:#eaeaea;">-5</div>
<div class="t" style="left:1219.9px;top:1013.9px;font-weight:400;font-size:16.5px;letter-spacing:0.6px;color:#eaeaea;">0</div>
<div class="a" style="left:0;top:1217px;width:1877px;height:7px;background:#181b24"></div>
<div class="a" style="left:0;top:1224px;width:1877px;height:2px;background:#2a2d36"></div>
<div class="a" style="left:0;top:1090px;width:1877px;height:127px;background:linear-gradient(rgba(8,10,14,0),rgba(8,10,14,.22))"></div>
<div class="a" style="left:969.7px;top:809px;width:110.3px;height:77px;border:5px solid #e5121e"></div>
<svg style="left:1011px;top:828px" width="20" height="30" viewBox="0 0 20 30"><path fill="#fff" stroke="#000" stroke-width="1.2" stroke-linejoin="round" d="M0.6,0.6V23.5L6,18.4L9.6,26.8L13.4,25.2L9.8,17H17.2Z"/></svg>

</body></html>
